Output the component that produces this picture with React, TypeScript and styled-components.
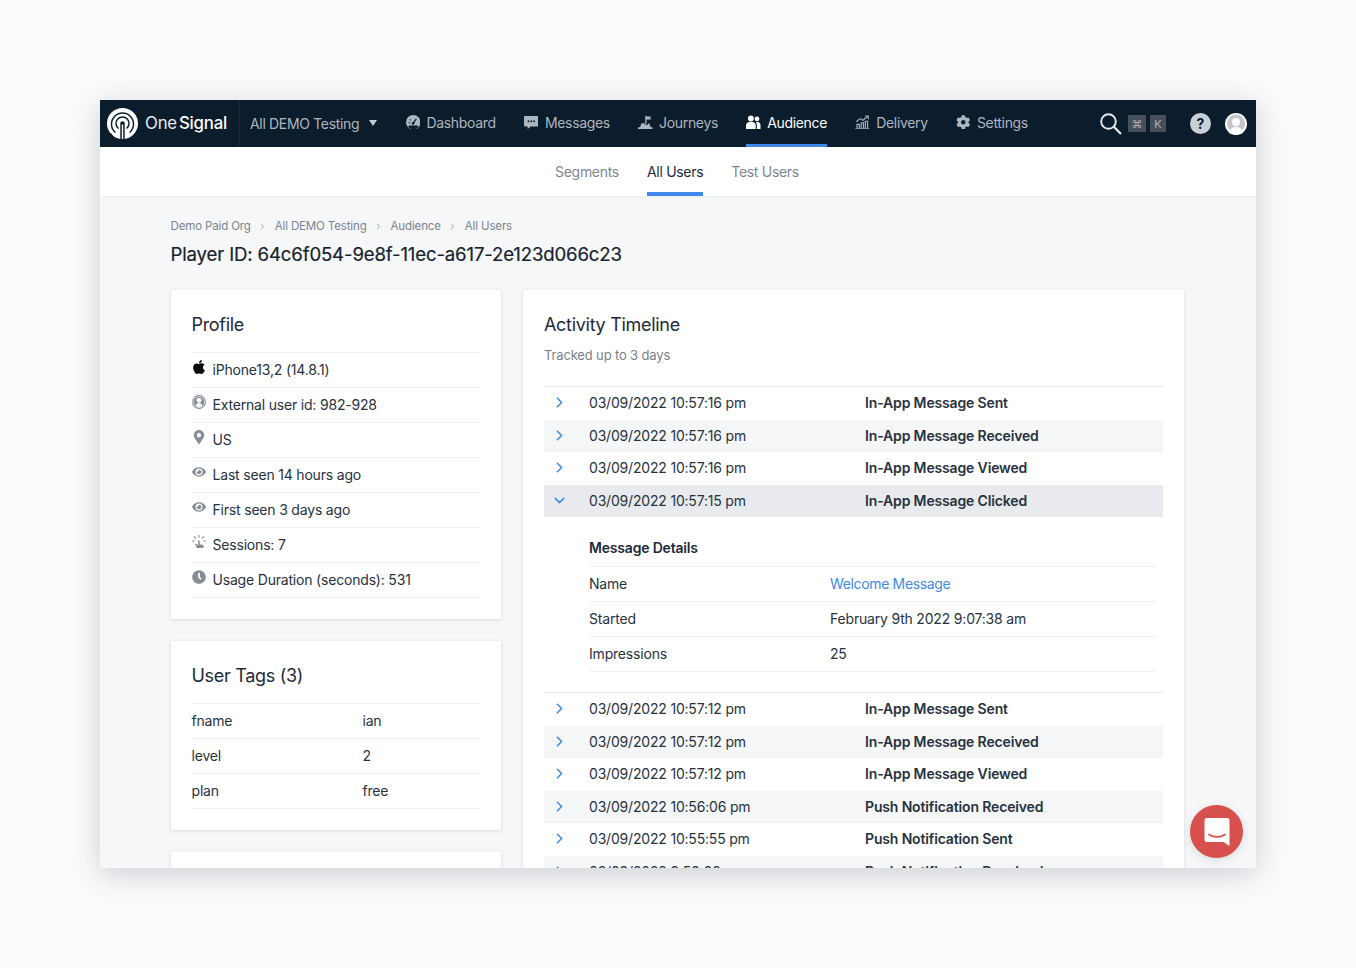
import React from "react";
import styled, { createGlobalStyle } from "styled-components";
import { FaApple, FaClock, FaCog, FaEye, FaMapMarkerAlt } from "react-icons/fa";
import { ChevronDown, ChevronRight } from "lucide-react";

const Global = createGlobalStyle`
  html, body { margin: 0; padding: 0; background: #fbfbfc; }
  body { font-family: Inter, "Liberation Sans", sans-serif; color: #1d2a3a; height: 968px; overflow: hidden; }
  * { box-sizing: border-box; }
`;

const Page = styled.div`
  padding: 100px;
  height: 968px;
`;
const Frame = styled.div`
  position: relative;
  height: 768px;
  overflow: hidden;
  background: #f6f7f9;
  box-shadow: 0 6px 28px rgba(40, 50, 70, 0.22);
`;
const NavBar = styled.header`
  height: 47px;
  background: #0b1c2c;
  display: flex;
  align-items: stretch;
  color: #aeb6bf;
  font-size: 14px;
  letter-spacing: -0.33px;
`;
const LogoBlock = styled.div`
  width: 140px;
  display: flex;
  align-items: center;
  gap: 7px;
  padding-left: 7px;
  padding-bottom: 1px;
  border-right: 1px solid #1b2b3b;
  color: #fff;
  font-size: 16.8px;
  letter-spacing: -0.2px;
  white-space: nowrap;
  b { font-weight: 500; }
  span { font-weight: 400; color: #e8ebee; margin-right: 2px; }
`;
const AppPicker = styled.div`
  display: flex;
  align-items: center;
  padding-left: 10px;
  padding-bottom: 1px;
  width: 165.5px;
  white-space: nowrap;
  i {
    margin-left: 10px;
    width: 0;
    height: 0;
    border-left: 4px solid transparent;
    border-right: 4px solid transparent;
    border-top: 6px solid #c6ccd3;
  }
`;
const NavList = styled.nav`
  display: flex;
  align-items: stretch;
  gap: 28.2px;
`;
const NavItem = styled.div<{ $active?: boolean }>`
  display: flex;
  align-items: center;
  gap: 7px;
  white-space: nowrap;
  color: ${(p) => (p.$active ? "#ffffff" : "#aeb6bf")};
  border-bottom: 3px solid ${(p) => (p.$active ? "#3f8ae8" : "transparent")};
  svg { width: 14.5px; height: 14.5px; flex: none; margin-right: -0.5px; }
`;
const NavRight = styled.div`
  margin-left: auto;
  display: flex;
  align-items: center;
  padding-right: 9px;
  color: #fff;
`;
const SearchGlyph = styled.svg`
  width: 22px;
  height: 22px;
  margin-right: 2px;
`;
const KeyCap = styled.span<{ $w: number }>`
  width: ${(p) => p.$w}px;
  height: 17px;
  margin-left: 4px;
  background: #464f5a;
  color: #aab1b9;
  font-size: 11px;
  letter-spacing: 0;
  display: flex;
  align-items: center;
  justify-content: center;
`;
const HelpDot = styled.span`
  width: 21px;
  height: 21px;
  margin-left: 24px;
  border-radius: 50%;
  background: #c9d0d7;
  color: #0b1c2c;
  font-size: 14px;
  font-weight: 700;
  letter-spacing: 0;
  display: flex;
  align-items: center;
  justify-content: center;
`;
const Avatar = styled.svg`
  width: 22px;
  height: 22px;
  margin-left: 14px;
`;
const SubNav = styled.div`
  height: 50px;
  padding-right: 2px;
  background: #fff;
  border-bottom: 1px solid #eceef1;
  display: flex;
  justify-content: center;
  gap: 28px;
  font-size: 14px;
  letter-spacing: -0.3px;
`;
const SubTab = styled.div<{ $active?: boolean }>`
  display: flex;
  align-items: center;
  height: 49px;
  color: ${(p) => (p.$active ? "#1d2a3a" : "#7d8792")};
  border-bottom: 4px solid ${(p) => (p.$active ? "#3f8ae8" : "transparent")};
  padding-top: 3px;
`;
const Content = styled.main`
  padding: 21px 72px 0 70.5px;
`;
const Crumbs = styled.div`
  display: flex;
  align-items: center;
  height: 16px;
  font-size: 11.5px;
  letter-spacing: -0.14px;
  color: #7b8490;
  svg { width: 9px; height: 9px; margin: 0 7.5px; }
`;
const Title = styled.h1`
  margin: 6px 0 21px;
  height: 29px;
  line-height: 29px;
  font-size: 18.6px;
  font-weight: 400;
  letter-spacing: -0.15px;
  color: #16232f;
  -webkit-text-stroke: 0.2px #16232f;
`;
const Columns = styled.div`
  display: grid;
  grid-template-columns: 330.5px 661px;
  gap: 22px;
  align-items: start;
`;
const Side = styled.div`
  display: flex;
  flex-direction: column;
  gap: 22px;
`;
const Card = styled.section`
  background: #fff;
  padding: 21px;
  box-shadow: 0 1px 4px rgba(30, 40, 60, 0.13);
  letter-spacing: -0.19px;
`;
const ClippedCard = styled(Card)`
  height: 120px;
`;
const CardTitle = styled.h2`
  margin: 0;
  height: 28px;
  line-height: 28px;
  font-size: 18px;
  font-weight: 400;
  letter-spacing: -0.3px;
  color: #1d2a3a;
`;
const InfoList = styled.div`
  margin-top: 13px;
  border-top: 1px solid #f0f1f3;
`;
const InfoRow = styled.div`
  height: 35px;
  padding-bottom: 1px;
  border-bottom: 1px solid #f0f1f3;
  display: flex;
  align-items: center;
  font-size: 14px;
  color: #27323f;
`;
const InfoIcon = styled.span<{ $dark?: boolean }>`
  width: 21px;
  flex: none;
  display: flex;
  margin-top: -5px;
  color: ${(p) => (p.$dark ? "#0c0c0c" : "#858d97")};
  svg {
    width: ${(p) => (p.$dark ? 16 : 14)}px;
    height: ${(p) => (p.$dark ? 16 : 14)}px;
    margin-left: ${(p) => (p.$dark ? -1 : 0)}px;
  }
`;
const TagRow = styled(InfoRow)`
  display: grid;
  grid-template-columns: 171px 1fr;
`;
const Sub = styled.p`
  margin: 6px 0 21px;
  height: 20px;
  line-height: 20px;
  font-size: 13px;
  letter-spacing: -0.15px;
  color: #78818c;
`;
const Timeline = styled.div`
  border-top: 1px solid #e8eaed;
  font-size: 14px;
`;
const Row = styled.div<{ $tone: "plain" | "zebra" | "open" }>`
  height: 32.5px;
  padding-bottom: 1px;
  display: grid;
  grid-template-columns: 45px 276px 1fr;
  align-items: center;
  background: ${(p) => (p.$tone === "open" ? "#e8eaed" : p.$tone === "zebra" ? "#f5f6f8" : "#fff")};
  color: #27323f;
  box-shadow: ${(p) => (p.$tone === "zebra" ? "inset 0 -1px 0 #eef0f2" : "none")};
  b { font-weight: 600; color: #27323f; letter-spacing: -0.15px; }
  svg { margin-left: 7px; color: #3f8ae8; width: 17px; height: 17px; stroke-width: 2.2; }
`;
const Details = styled.div`
  height: 176px;
  padding: 21px 7px 0 45px;
  border-bottom: 1px solid #e8eaed;
  font-size: 14px;
`;
const DetailHead = styled.div`
  height: 29px;
  line-height: 20px;
  font-weight: 600;
  border-bottom: 1px solid #f0f1f3;
`;
const DetailRow = styled.div`
  height: 35px;
  padding-bottom: 2px;
  display: grid;
  grid-template-columns: 241px 1fr;
  align-items: center;
  border-bottom: 1px solid #f0f1f3;
  color: #27323f;
  a { color: #3f8ae8; text-decoration: none; letter-spacing: -0.35px; }
`;
const ChatBubble = styled.div`
  position: absolute;
  left: 1090px;
  top: 705px;
  width: 53px;
  height: 53px;
  border-radius: 50%;
  background: #d8504d;
  box-shadow: 0 2px 10px rgba(0, 0, 0, 0.12);
  display: flex;
  align-items: center;
  justify-content: center;
`;

const Logo = () => (
  <svg width="31" height="31" viewBox="0 0 31 31">
    <circle cx="15.5" cy="15.5" r="15.5" fill="#fff" />
    <path d="M8.400 24.500A11 11 0 1 1 22.600 24.500" fill="none" stroke="#0b1c2c" strokeWidth="1.500" />
    <path d="M11.500 20.500A6.500 6.500 0 1 1 19.500 20.500" fill="none" stroke="#0b1c2c" strokeWidth="1.500" />
    <path d="M13.300 31V15.500a2.200 2.200 0 0 1 4.400 0V31z" fill="#0b1c2c" />
    <path d="M14.800 31V16.500h1.400V31z" fill="#fff" />
    <path d="M0 31h8L4 25zM23 31h8v-6z" fill="#0b1c2c" />
  </svg>
);
const Gauge = () => (
  <svg viewBox="0 0 14 14">
    <circle cx="7" cy="7" r="7" fill="currentColor" />
    <path d="M3 10.200h8l1 1.500a7 7 0 0 1-10 0z" fill="#0b1c2c" />
    <path d="M6.200 7.600L9.600 3.400l.8.600-3 4.400z" fill="#0b1c2c" />
    <circle cx="6.800" cy="8.200" r="1.300" fill="#0b1c2c" />
    <path d="M2.500 7h1.500v1H2.500zM4 3.800l1 1-.7.700-1-1z" fill="#0b1c2c" />
  </svg>
);
const Bubble = () => (
  <svg viewBox="0 0 14 14">
    <path d="M1 1h12a1 1 0 0 1 1 1v8a1 1 0 0 1-1 1H6.500L3.500 13.500V11H1a1 1 0 0 1-1-1V2a1 1 0 0 1 1-1z" fill="currentColor" />
    <circle cx="4.300" cy="6" r=".9" fill="#0b1c2c" />
    <circle cx="7" cy="6" r=".9" fill="#0b1c2c" />
    <circle cx="9.700" cy="6" r=".9" fill="#0b1c2c" />
  </svg>
);
const Journey = () => (
  <svg viewBox="0 0 14 14" fill="currentColor">
    <path d="M7 .8h1.200v.6H13l-1.400 1.500L13 4.400H8.200V9H7z" />
    <path d="M3.400 8h2.800l.6 1.400h2.700l.7-1.400h.6l1.500 3.800H14V13.500H0v-1.700h1.900z" />
  </svg>
);
const People = () => (
  <svg viewBox="0 0 14 14" fill="currentColor">
    <circle cx="4.700" cy="3.400" r="2.800" />
    <circle cx="10.600" cy="3.800" r="2.300" />
    <path d="M0 13.500V10c0-2 1.700-3.500 4.700-3.500S9.400 8 9.400 10v3.500z" />
    <path d="M10.500 13.500V10c0-1.300-.4-2.300-1.200-3 .4-.2.900-.3 1.500-.3 2.300 0 3.200 1.400 3.200 3v3.800z" />
  </svg>
);
const Delivery = () => (
  <svg viewBox="0 0 14 14" fill="none" stroke="currentColor" strokeWidth="1.100">
    <path d="M.3 13.400h13.400" />
    <path d="M2 13V9h2.200v4M6 13V7.500h2.200V13M10 13V6h2.200v7" />
    <path d="M1.200 6.500l3.800-3 2.800 1.600 4.400-4" />
    <path d="M9.800 1h3v3" />
  </svg>
);
const Sessions = () => (
  <svg viewBox="0 0 14 14" fill="currentColor">
    <path d="M6.200 5.500h1.500v3.800l3.800.7V13H4.300V10.800L2.800 9.300l1-.6 2.400 1.200z" />
    <path d="M6.500 0h1v3h-1zM1.500 1.800l.8-.7 2 2-.8.7zM12.500 1.800l-.8-.7-2 2 .8.7zM0 5.500h2.500v1H0zM11.500 5.500H14v1h-2.500z" />
  </svg>
);
const UserRing = () => (
  <svg viewBox="0 0 14 14">
    <circle cx="7" cy="7" r="6.400" fill="none" stroke="currentColor" strokeWidth="1.100" />
    <circle cx="7" cy="7" r="5.300" fill="currentColor" />
    <circle cx="7" cy="5.300" r="2.400" fill="#fff" />
    <path d="M3.800 10.500c.5-1.700 1.700-2.500 3.200-2.500s2.700.8 3.200 2.500L8 12.200H6z" fill="#fff" />
  </svg>
);
const ChatGlyph = () => (
  <svg width="26" height="30" viewBox="0 0 26 30">
    <path d="M3 1h20a2.500 2.500 0 0 1 2.500 2.500V29l-6-4H3A2.500 2.500 0 0 1 .5 22.500v-19A2.500 2.500 0 0 1 3 1z" fill="#fff" />
    <path d="M5 17.500c4.500 3.200 11.500 3.200 16 0" fill="none" stroke="#d8504d" strokeWidth="1.800" strokeLinecap="round" />
  </svg>
);

type Ev = [string, string];
const before: Ev[] = [
  ["03/09/2022 10:57:16 pm", "In-App Message Sent"],
  ["03/09/2022 10:57:16 pm", "In-App Message Received"],
  ["03/09/2022 10:57:16 pm", "In-App Message Viewed"],
];
const after: Ev[] = [
  ["03/09/2022 10:57:12 pm", "In-App Message Sent"],
  ["03/09/2022 10:57:12 pm", "In-App Message Received"],
  ["03/09/2022 10:57:12 pm", "In-App Message Viewed"],
  ["03/09/2022 10:56:06 pm", "Push Notification Received"],
  ["03/09/2022 10:55:55 pm", "Push Notification Sent"],
  ["03/09/2022 9:50:02 pm", "Push Notification Received"],
];

export default function App() {
  return (
    <Page>
      <Global />
      <Frame>
        <NavBar>
          <LogoBlock>
            <Logo />
            <div><span>One</span><b>Signal</b></div>
          </LogoBlock>
          <AppPicker>All DEMO Testing<i /></AppPicker>
          <NavList>
            <NavItem><Gauge />Dashboard</NavItem>
            <NavItem><Bubble />Messages</NavItem>
            <NavItem><Journey />Journeys</NavItem>
            <NavItem $active><People />Audience</NavItem>
            <NavItem><Delivery />Delivery</NavItem>
            <NavItem><FaCog />Settings</NavItem>
          </NavList>
          <NavRight>
            <SearchGlyph viewBox="0 0 22 22" fill="none" stroke="#e8ebee">
              <circle cx="8.500" cy="8.500" r="7.300" strokeWidth="1.900" />
              <path d="M13.800 13.800L21 21" strokeWidth="2.300" />
            </SearchGlyph>
            <KeyCap $w={18}>⌘</KeyCap>
            <KeyCap $w={16}>K</KeyCap>
            <HelpDot>?</HelpDot>
            <Avatar viewBox="0 0 22 22">
              <circle cx="11" cy="11" r="11" fill="#fff" />
              <circle cx="11" cy="10.500" r="9" fill="#c4c7cb" />
              <circle cx="11" cy="9" r="4" fill="#fff" />
              <path d="M4 20c1-4.500 4-6 7-6s6 1.500 7 6l-7 2z" fill="#fff" />
            </Avatar>
          </NavRight>
        </NavBar>
        <SubNav>
          <SubTab>Segments</SubTab>
          <SubTab $active>All Users</SubTab>
          <SubTab>Test Users</SubTab>
        </SubNav>
        <Content>
          <Crumbs>
            Demo Paid Org<ChevronRight />All DEMO Testing<ChevronRight />Audience<ChevronRight />All Users
          </Crumbs>
          <Title>Player ID: 64c6f054-9e8f-11ec-a617-2e123d066c23</Title>
          <Columns>
            <Side>
              <Card>
                <CardTitle>Profile</CardTitle>
                <InfoList>
                  <InfoRow><InfoIcon $dark><FaApple /></InfoIcon>iPhone13,2 (14.8.1)</InfoRow>
                  <InfoRow><InfoIcon><UserRing /></InfoIcon>External user id: 982-928</InfoRow>
                  <InfoRow><InfoIcon><FaMapMarkerAlt /></InfoIcon>US</InfoRow>
                  <InfoRow><InfoIcon><FaEye /></InfoIcon>Last seen 14 hours ago</InfoRow>
                  <InfoRow><InfoIcon><FaEye /></InfoIcon>First seen 3 days ago</InfoRow>
                  <InfoRow><InfoIcon><Sessions /></InfoIcon>Sessions: 7</InfoRow>
                  <InfoRow><InfoIcon><FaClock /></InfoIcon>Usage Duration (seconds): 531</InfoRow>
                </InfoList>
              </Card>
              <Card>
                <CardTitle>User Tags (3)</CardTitle>
                <InfoList>
                  <TagRow><span>fname</span><span>ian</span></TagRow>
                  <TagRow><span>level</span><span>2</span></TagRow>
                  <TagRow><span>plan</span><span>free</span></TagRow>
                </InfoList>
              </Card>
              <ClippedCard />
            </Side>
            <Card>
              <CardTitle>Activity Timeline</CardTitle>
              <Sub>Tracked up to 3 days</Sub>
              <Timeline>
                {before.map(([t, e], i) => (
                  <Row key={i} $tone={i % 2 ? "zebra" : "plain"}>
                    <ChevronRight /><span>{t}</span><b>{e}</b>
                  </Row>
                ))}
                <Row $tone="open">
                  <ChevronDown /><span>03/09/2022 10:57:15 pm</span><b>In-App Message Clicked</b>
                </Row>
                <Details>
                  <DetailHead>Message Details</DetailHead>
                  <DetailRow><span>Name</span><a href="#m">Welcome Message</a></DetailRow>
                  <DetailRow><span>Started</span><span>February 9th 2022 9:07:38 am</span></DetailRow>
                  <DetailRow><span>Impressions</span><span>25</span></DetailRow>
                </Details>
                {after.map(([t, e], i) => (
                  <Row key={i} $tone={i % 2 ? "zebra" : "plain"}>
                    <ChevronRight /><span>{t}</span><b>{e}</b>
                  </Row>
                ))}
              </Timeline>
            </Card>
          </Columns>
        </Content>
        <ChatBubble><ChatGlyph /></ChatBubble>
      </Frame>
    </Page>
  );
}
